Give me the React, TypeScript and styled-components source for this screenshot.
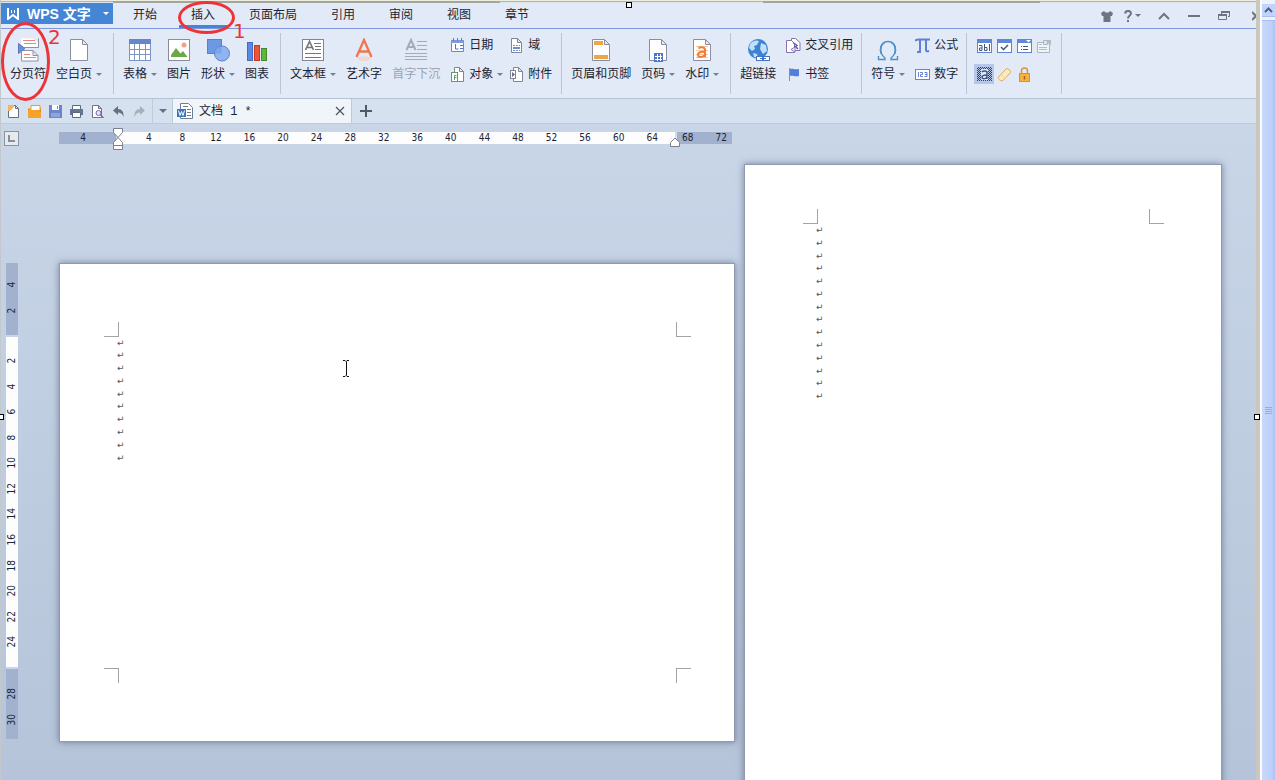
import React from "react";
import styled, { createGlobalStyle } from "styled-components";

const GlobalStyle = createGlobalStyle`
  * { box-sizing: border-box; }
  body {
    margin: 0;
    overflow: hidden;
    font-family: "Liberation Sans", "Noto Sans CJK SC", sans-serif;
    font-size: 12px;
    color: #1c2433;
  }
  button {
    font: inherit;
    color: inherit;
    background: none;
    border: 0;
    padding: 0;
    margin: 0;
    cursor: default;
  }
  svg { display: block; flex: none; }
`;

/* ---------- frame ---------- */

const Screen = styled.div`
  position: relative;
  display: flex;
  height: 100vh;
  overflow: hidden;
`;

const Main = styled.main`
  flex: 1;
  min-width: 0;
  display: flex;
  flex-direction: column;
  border-left: 1px solid #c3c8cd;
  background: #e1eaf6;
`;

const TopEdge = styled.div`
  display: flex;
  flex: none;
  height: 3px;
  border-top: 1px solid #ecece0;
  background: linear-gradient(#b4b6a9 1px, #dde4ea 1px);
`;

const EdgeStrip = styled.div<{ $grow: number; $dark?: boolean }>`
  flex: ${(p) => p.$grow} 1 0;
  background: ${(p) => (p.$dark ? "#a3a69b" : "transparent")};
`;

const FrameEdge = styled.div`
  flex: none;
  width: 6px;
  background: #c9c7be;
  border-right: 2px solid #fbfbf7;
`;

/* ---------- title bar ---------- */

const TitleBar = styled.header`
  display: flex;
  flex: none;
  height: 26px;
  border-bottom: 1px solid #7f95de;
`;

const AppButton = styled.button`
  display: flex;
  align-items: center;
  width: 112px;
  height: 21px;
  padding-left: 6px;
  gap: 7px;
  background: #4585d6;
  color: #fff;
  font-size: 14px;
  font-weight: 700;
  white-space: nowrap;
`;

const AppName = styled.span`
  flex: 1;
  text-align: left;
  line-height: 20px;
`;

const AppArrow = styled.span`
  width: 10px;
  display: flex;
`;

const MenuTabs = styled.nav`
  display: flex;
  gap: 10px;
  margin-left: 8px;
`;

const MenuTab = styled.button<{ $active?: boolean }>`
  height: 25px;
  padding: 2px 12px 0;
  line-height: 20px;
  white-space: nowrap;
  border-bottom: 3px solid ${(p) => (p.$active ? "#4585d6" : "transparent")};
`;

const WindowControls = styled.div`
  display: flex;
  margin-left: auto;
`;

const WindowButton = styled.button<{ $width: number }>`
  display: flex;
  align-items: center;
  justify-content: center;
  gap: 3px;
  width: ${(p) => p.$width}px;
  height: 25px;
  overflow: hidden;
`;

const CloseWindow = styled(WindowButton)`
  justify-content: flex-start;
  padding-left: 9px;
`;

/* ---------- ribbon ---------- */

const Ribbon = styled.section`
  display: flex;
  flex: none;
  height: 70px;
  padding: 4px 0;
  border-bottom: 1px solid #b4c2d4;
`;

const Group = styled.div<{ $start?: number; $end?: number }>`
  display: flex;
  gap: 10px;
  flex: none;
  padding: 5px ${(p) => p.$end ?? 11}px 0 ${(p) => p.$start ?? 9}px;
  border-right: 1px solid #b9c6d8;
`;

const BigButton = styled.button<{ $muted?: boolean }>`
  display: flex;
  flex-direction: column;
  align-items: center;
  height: 46px;
  gap: 3px;
  white-space: nowrap;
  color: ${(p) => (p.$muted ? "#9aa4b3" : "inherit")};
`;

const Label = styled.span`
  display: flex;
  align-items: center;
  line-height: 18px;
`;

const ArrowSlot = styled.span`
  display: flex;
  justify-content: flex-end;
  width: 10px;
`;

const SmallGrid = styled.div`
  display: grid;
  grid-template-columns: auto;
  grid-template-rows: 18px 18px;
  grid-auto-flow: column;
  align-content: start;
  justify-items: start;
  row-gap: 11px;
  column-gap: 6px;
  margin-top: -2px;
`;

const SmallButton = styled.button`
  display: flex;
  align-items: center;
  gap: 4px;
  line-height: 18px;
  white-space: nowrap;
`;

const FormGrid = styled.div`
  display: grid;
  grid-template-columns: repeat(4, 20px);
  grid-template-rows: 20px 20px;
  row-gap: 8px;
  align-content: start;
  margin-top: -2px;
`;

const FormButton = styled.button<{ $active?: boolean }>`
  display: flex;
  align-items: center;
  justify-content: center;
  background: ${(p) => (p.$active ? "#b5c6e8" : "transparent")};
`;

/* ---------- document tabs ---------- */

const TabBar = styled.div`
  display: flex;
  flex: none;
  height: 25px;
  background: #d5e1ee;
  border-bottom: 1px solid #bccada;
`;

const QuickAccess = styled.div`
  display: flex;
  padding-left: 2px;
`;

const QuickButton = styled.button`
  display: flex;
  align-items: center;
  justify-content: center;
  width: 21px;
  height: 24px;
`;

const QuickMore = styled(QuickButton)`
  width: 20px;
  margin-left: 2px;
  border-left: 1px solid #c0ccdb;
`;

const DocTab = styled.div`
  display: flex;
  align-items: center;
  width: 180px;
  padding: 0 6px 0 4px;
  gap: 6px;
  background: #f0f5fa;
  border: solid #bccada;
  border-width: 0 1px;
`;

const DocName = styled.span`
  flex: 1;
  padding-top: 2px;
  font-family: "Liberation Mono", "Noto Sans CJK SC", monospace;
  line-height: 22px;
`;

const NewTab = styled.button`
  display: flex;
  align-items: center;
  padding: 0 8px;
`;

/* ---------- workspace ---------- */

const Workspace = styled.section`
  flex: 1;
  min-height: 0;
  overflow: hidden;
  background: linear-gradient(#c9d6e8, #b5c4d9);
`;

const RulerRow = styled.div`
  display: flex;
  align-items: flex-start;
  padding: 7px 0 0 3px;
  height: 40px;
`;

const TabStop = styled.button`
  display: flex;
  align-items: center;
  justify-content: center;
  width: 15px;
  height: 15px;
  border: 1px solid #8893a3;
  background: #e6ebf0;
`;

const Ruler = styled.div`
  position: relative;
  display: flex;
  width: 673px;
  height: 12px;
  margin: 1px 0 0 40px;
  font-family: "DejaVu Sans Condensed", "DejaVu Sans", sans-serif;
  font-size: 10px;
  line-height: 12px;
`;

const RulerStart = styled.div`
  width: 57px;
  padding-right: 9px;
  text-align: center;
  background: #a1b1ce;
`;

const RulerBody = styled.div`
  display: flex;
  flex: 1;
  padding: 0 6px 0 14px;
  background: #fdfdfe;
  border: solid #d3dcea;
  border-width: 0 2px;
`;

const RulerCell = styled.span`
  flex: 1;
  text-align: center;
`;

const RulerEnd = styled.div`
  display: flex;
  gap: 22px;
  width: 55px;
  padding-left: 5px;
  background: #a1b1ce;
`;

const IndentMarker = styled.div`
  position: absolute;
  left: 54px;
  top: -4px;
`;

const RightMarker = styled.div`
  position: absolute;
  right: 52px;
  top: 5px;
`;

const Canvas = styled.div`
  display: flex;
  align-items: center;
  padding-left: 5px;
`;

const SideRuler = styled.div`
  display: flex;
  flex-direction: column;
  flex: none;
  width: 12px;
  height: 478px;
  font-family: "DejaVu Sans Condensed", "DejaVu Sans", sans-serif;
  font-size: 10px;
  line-height: 12px;
`;

const SideSegment = styled.div<{ $size: number; $from: number; $to: number; $dark?: boolean }>`
  display: flex;
  flex-direction: column;
  flex: none;
  height: ${(p) => p.$size}px;
  padding: ${(p) => p.$from}px 0 ${(p) => p.$to}px;
  background: ${(p) => (p.$dark ? "#a1b1ce" : "#fdfdfe")};
  & + & { border-top: 2px solid #c9d5e7; }
`;

const SideCell = styled.span`
  flex: 1;
  min-height: 0;
  writing-mode: vertical-rl;
  transform: rotate(180deg);
  text-align: center;
`;

const Pages = styled.div`
  display: flex;
  align-items: center;
  gap: 9px;
  margin-left: 41px;
`;

const Page = styled.article<{ $landscape?: boolean }>`
  display: grid;
  flex: none;
  grid-template: 15px 1fr 15px / 15px 1fr 15px;
  width: ${(p) => (p.$landscape ? 676 : 478)}px;
  height: ${(p) => (p.$landscape ? 479 : 676)}px;
  padding: ${(p) => (p.$landscape ? "58px 43px 58px 44px" : "44px 57px 43px 58px")};
  background: #fff;
  border: 1px solid #8f9bac;
  box-shadow: 0 0 7px rgba(72, 88, 120, 0.65);
`;

const Crop = styled.span<{ $v: "top" | "bottom"; $h: "left" | "right" }>`
  border: 0 solid #a3a3a3;
  grid-row: ${(p) => (p.$v === "top" ? 1 : 3)};
  grid-column: ${(p) => (p.$h === "left" ? 1 : 3)};
  border-width: ${(p) =>
    `${p.$v === "top" ? 0 : 1}px ${p.$h === "left" ? 1 : 0}px ${p.$v === "top" ? 1 : 0}px ${p.$h === "left" ? 0 : 1}px`};
`;

const Paragraphs = styled.div<{ $height: number }>`
  grid-row: 2;
  grid-column: 2;
  display: flex;
  flex-direction: column;
  height: ${(p) => p.$height}px;
  margin-left: -2px;
`;

const Mark = styled.span`
  flex: 1;
  min-height: 0;
  font-family: "DejaVu Sans", sans-serif;
  font-size: 9px;
  line-height: 13px;
  color: #555;
`;

/* ---------- scroll bar ---------- */

const ScrollBar = styled.div`
  display: flex;
  flex-direction: column;
  flex: none;
  width: 13px;
  padding-top: 4px;
  background: #eef2fc;
`;

const ScrollUp = styled.button`
  display: flex;
  align-items: center;
  justify-content: center;
  height: 13px;
  background: #c3d4fc;
  border-bottom: 1px solid #a9bdf0;
`;

const ScrollThumb = styled.div`
  flex: 1;
  display: flex;
  align-items: center;
  justify-content: center;
  margin-top: 3px;
  padding-top: 20px;
  background: linear-gradient(90deg, #c8d7fd, #bfd0fb 70%, #aac3f6);
  border-top: 1px solid #a9bdf0;
`;

/* ---------- annotations lying over the screen ---------- */

const Handle = styled.i<{ $x: number; $y: number }>`
  position: absolute;
  left: ${(p) => p.$x}px;
  top: ${(p) => p.$y}px;
  width: 6px;
  height: 6px;
  background: #fff;
  border: 1px solid #000;
`;

const Ring = styled.i<{ $x: number; $y: number; $w: number; $h: number }>`
  position: absolute;
  left: ${(p) => p.$x}px;
  top: ${(p) => p.$y}px;
  width: ${(p) => p.$w}px;
  height: ${(p) => p.$h}px;
  border: 3px solid #ee3338;
  border-radius: 50%;
  pointer-events: none;
`;

const Step = styled.span<{ $x: number; $y: number }>`
  position: absolute;
  left: ${(p) => p.$x}px;
  top: ${(p) => p.$y}px;
  font-family: "DejaVu Sans", sans-serif;
  font-size: 20px;
  line-height: 24px;
  color: #ee3338;
`;

const TextCursor = styled.div`
  position: absolute;
  left: 342px;
  top: 360px;
`;

/* ---------- icons ---------- */

const Arrow = ({ color = "#74809a" }: { color?: string }) => (
  <svg width="6" height="3" viewBox="0 0 6 3"><path d="M0 0h6L3 3z" fill={color} /></svg>
);

const Svg = ({ w, h = w, children }: { w: number; h?: number; children: React.ReactNode }) => (
  <svg width={w} height={h} viewBox={`0 0 ${w} ${h}`} fill="none">{children}</svg>
);

const Big = ({ children }: { children: React.ReactNode }) => <Svg w={24}>{children}</Svg>;

const Sheet = ({ stroke = "#8c8ca0" }: { stroke?: string }) => (
  <path d="M3.5 1.5h12l5 5v16h-17zM15.5 1.5v5h5" fill="#fff" stroke={stroke} />
);

const LogoIcon = () => (
  <Svg w={13} h={13}><path d="M1 1v11l5-4 5 4V1" stroke="#fff" strokeWidth="2" /><path d="M4.500 3v3M7.500 3v3" stroke="#fff" /></Svg>
);

const PageBreakIcon = () => (
  <Big>
    <path d="M5 .5h12l5 4v5H5z" fill="#fff" />
    <path d="M5 9.500h17.500V.5" stroke="#9090a4" />
    <path d="M7 2.500h12M8 5.500h12" stroke="#e9877a" />
    <path d="M5.500 22.500V12.500h11.500l5 5v5.500H5.500zM17 12.500v5h5" fill="#fff" stroke="#9090a4" />
    <path d="M8 16.500h6M8 19.500h12" stroke="#e9877a" />
    <path d="M2.500 5.500L9 10.500l-6.500 5z" fill="#6f8fd6" stroke="#5878c6" />
  </Big>
);

const BlankPageIcon = () => <Big><Sheet /></Big>;

const TableIcon = () => (
  <Big>
    <rect x="1.500" y="1.500" width="21" height="21" fill="#fff" stroke="#7d95c6" />
    <rect x="1" y="1" width="22" height="5" fill="#6688cb" />
    <path d="M1 11.500h22M1 16.500h22M6.500 6v17M11.500 6v17M17.500 6v17" stroke="#7d95c6" />
  </Big>
);

const PictureIcon = () => (
  <Big>
    <rect x="1.500" y="1.500" width="21" height="21" fill="#fff" stroke="#8b8d96" />
    <path d="M4 19v-2l5-7 4.500 5.500L16 13l4.500 6z" fill="#69a94a" />
    <circle cx="17" cy="7" r="2.500" fill="#f0a187" />
  </Big>
);

const ShapesIcon = () => (
  <Big>
    <rect x="1.500" y="1.500" width="14" height="14" fill="#6d98e4" stroke="#5b7fd0" />
    <circle cx="16" cy="15.500" r="7.500" fill="#8fb4ef" stroke="#5b7fd0" />
    <path d="M9 15.500v-1a7 7 0 0 1 6.500-6v7z" fill="#7ba5e9" />
  </Big>
);

const ChartIcon = () => (
  <Big>
    <rect x="2.500" y="4.500" width="5" height="18" fill="#5a8be3" stroke="#3e6cc9" />
    <rect x="9.500" y="7.500" width="5" height="15" fill="#ee5536" stroke="#c53c22" />
    <rect x="16.500" y="10.500" width="5" height="12" fill="#60b53a" stroke="#418c25" />
  </Big>
);

const LetterLines = ({ color }: { color: string }) => (
  <>
    <path d="M4.500 12l4-8.500L12.500 12M6 9.500h5" stroke={color} strokeWidth="1.600" />
    <path d="M13 5.500h7M14 8.500h6M14 11.500h6M4 15.500h16M4 19.500h16" stroke={color} />
  </>
);

const TextBoxIcon = () => (
  <Big><rect x="1.500" y="1.500" width="21" height="21" fill="#fff" stroke="#85858f" /><LetterLines color="#74747e" /></Big>
);

const WordArtIcon = () => (
  <Big>
    <path d="M5 20c3-2 11-2 14 0l-3 3H8z" fill="#fbc5b4" opacity=".5" />
    <path d="M4.500 19L12 2l7.500 17M7 13.500h10" stroke="#f0764f" strokeWidth="2.300" />
  </Big>
);

const DropCapIcon = () => (
  <Big>
    <path d="M2.500 12l4.500-10L11.500 12M4 9h6" stroke="#a2abba" strokeWidth="2" />
    <path d="M13 3.500h10M13 7.500h10M13 11.500h10M1 15.500h22M1 18.500h22M1 21.500h22" stroke="#a2abba" />
  </Big>
);

const HeaderFooterIcon = () => (
  <Big><Sheet /><path d="M5 3h9v4H5zM5 17h14v4H5z" fill="#eda746" /></Big>
);

const PageNumberIcon = () => (
  <Big>
    <Sheet /><rect x="8" y="15" width="9" height="9" fill="#4b74d3" />
    <path d="M11.500 16v7M14.500 16v7M9 18.500h7M9 21.500h7" stroke="#fff" />
  </Big>
);

const WatermarkIcon = () => (
  <Big>
    <Sheet /><path d="M6 8.500h12M6 12.500h12M6 16.500h12M6 19.500h12" stroke="#f7c49c" />
    <path d="M8.500 10.500c1-1.500 6.500-2 6.500 1.500v7M15 14c-4-.5-7 .2-7 2.800 0 3 5 3 7 0" stroke="#ee7d35" strokeWidth="2" />
  </Big>
);

const LinkIcon = () => (
  <Big>
    <circle cx="12" cy="11" r="10" fill="#3d83d3" />
    <path d="M4 6c3-4 7-4 9-3l-2 4-3 1 1 3-3 2-3-3zM15 5l5 2 1 6-4 3-3-5zM7 15l4 1 1 4-4-1z" fill="#bfe0f8" />
    <rect x="10.500" y="18.500" width="6" height="4" fill="#fff" stroke="#4473c8" />
    <rect x="17.500" y="18.500" width="6" height="4" fill="#fff" stroke="#4473c8" />
    <path d="M14 20.500h6" stroke="#4473c8" />
  </Big>
);

const OmegaIcon = () => (
  <Big>
    <path d="M2.500 18v3.500h6.500v-1.500C6 17.500 4.500 15 4.500 11.500c0-5 3-8 7.500-8s7.500 3 7.500 8c0 3.500-1.500 6-4.500 8.500v1.500h6.500V18" stroke="#4c8fcb" strokeWidth="1.400" />
    <path d="M5 15.500c-1-5 0-9 3.500-11M19 15.500c1-5 0-9-3.500-11" stroke="#4c8fcb" strokeWidth="1.600" />
  </Big>
);

const DateIcon = () => (
  <Svg w={15}>
    <path d="M1.500 2.500h12v11h-12z" fill="#fff" stroke="#6a86cf" />
    <path d="M1 2h13v3H1z" fill="#7f9bdd" /><path d="M3.500 0v3M7.500 0v3M11.500 0v3" stroke="#5f7dcc" />
    <path d="M5.500 6v5h3M10 7.500h3M10 10.500h3" stroke="#4e72c8" />
  </Svg>
);

const SmallSheet = () => <path d="M2.500 .5h6l4 4v10h-10zM8.500 .5v4h4" fill="#fff" stroke="#83839a" />;

const ObjectIcon = () => (
  <Svg w={15}>
    <path d="M4.500 .5h5l4 4v10h-9zM9.500 .5v4h4" fill="#fff" stroke="#83839a" />
    <rect x="1.500" y="5.500" width="6" height="9" fill="#fff" stroke="#58a45a" /><path d="M4.500 13V8.500h2M4.500 10.500h2" stroke="#58a45a" />
  </Svg>
);

const FieldIcon = () => (
  <Svg w={15}><SmallSheet /><path d="M4 7.500h7M4 12.500h7" stroke="#6d8bce" strokeDasharray="2 1" /><path d="M4 10h7" stroke="#6d8bce" strokeWidth="2" /></Svg>
);

const AttachIcon = () => (
  <Svg w={15}>
    <path d="M4.500 .5h5l4 4v10h-9zM9.500 .5v4h4" fill="#fff" stroke="#83839a" />
    <rect x="1.500" y="3.500" width="5" height="8" fill="#fff" stroke="#83839a" /><path d="M3 5l3 2.500L3 10z" fill="#6b6b85" />
  </Svg>
);

const CrossRefIcon = () => (
  <Svg w={15}>
    <path d="M5.500 .5h4l4.500 4v8H5.500z" fill="#fff" stroke="#8372b4" />
    <path d="M.5 2.500h5l3 3v9h-8z" fill="#fff" stroke="#8372b4" />
    <path d="M7 4.500l4 3-1.500 1L12 11" stroke="#6f5aa8" strokeWidth="1.500" /><path d="M9 9l-4 2.500L9 14z" fill="#fff" stroke="#8372b4" />
  </Svg>
);

const FlagIcon = () => (
  <Svg w={15}><path d="M3.500 1v13" stroke="#8392b4" /><path d="M4 2c3-1 4 1 9 0v7c-5 1-6-1-9 0z" fill="#4f7fdb" /></Svg>
);

const PiIcon = () => (
  <Svg w={15}><path d="M0 3c1-1.500 2-1.500 4-1.500h11M5 2v11.500M11 2v10c0 1.500 1 1.500 3 1M2 14h4" stroke="#5f7fd0" strokeWidth="2" /></Svg>
);

const NumberIcon = () => (
  <Svg w={15}>
    <rect x=".5" y="2.500" width="14" height="10" fill="#fff" stroke="#6485d2" />
    <path d="M3.500 5v5M5 5.500h2.500v2H5.500v2H8M9.500 5.500h2.500v4H9.500M10 7.500h2" stroke="#6485d2" />
  </Svg>
);

const FormFrame = () => (
  <><rect x=".5" y=".5" width="14" height="13" fill="#fff" stroke="#5f82d0" /><path d="M0 0h15v4H0z" fill="#5f88dc" /></>
);

const TextFieldIcon = () => (
  <Svg w={15} h={14}><FormFrame /><path d="M2 6.500h3v5H2.500V9H5M7.500 5v6.500H10V8.500H7.500M12.500 5v7" stroke="#44557a" /></Svg>
);
const CheckFieldIcon = () => (
  <Svg w={15} h={14}><FormFrame /><path d="M4 8l2.500 2.500L11 6" stroke="#44557a" strokeWidth="1.500" /></Svg>
);
const ListFieldIcon = () => (
  <Svg w={15} h={14}><FormFrame /><path d="M9 1h5L11.500 3.500z" fill="#fff" /><path d="M4 7.500h1M6 7.500h5M4 10.500h1M6 10.500h5" stroke="#44557a" /></Svg>
);
const FieldOptionsIcon = () => (
  <Svg w={15} h={14}>
    <path d="M.5 3.500h12v10H.5z" fill="#f0f3f8" stroke="#aab4c2" />
    <path d="M6.500 1.500h4v4h-4z" fill="#dde3ea" stroke="#aab4c2" /><path d="M10 1h4v5h-2z" fill="#b2bbc7" />
    <path d="M2 5.500h3M2 8.500h8M2 10.500h8" stroke="#b3bdca" />
  </Svg>
);
const ShadingIcon = () => (
  <Svg w={15}>
    <path d="M0 1.500h15M0 3.500h15M0 5.500h15M0 7.500h15M0 9.500h15M0 11.500h15M0 13.500h15" stroke="#31415f" strokeDasharray="1 1" />
    <path d="M1 .5h14M1 2.500h14M1 4.500h14M1 6.500h14M1 8.500h14M1 10.500h14M1 12.500h14" stroke="#31415f" strokeDasharray="1 1" />
    <path d="M4 2h7v11H4z" fill="#dfe9f8" />
    <path d="M5 5c1-1.500 5-1.500 5 .5V12M10 8c-3 0-5 .4-5 2 0 2.500 4 2 5 0" stroke="#3b5486" strokeWidth="1.500" />
  </Svg>
);
const EraserIcon = () => (
  <Svg w={15}><path d="M1.500 10L9 2c1-1 5 1 4.500 3.500L6 13.500C4 14.500.5 12 1.500 10z" fill="#fdebc0" stroke="#dba75c" /><path d="M4 8l5 3" stroke="#f5d595" /></Svg>
);
const LockIcon = () => (
  <Svg w={15}><path d="M4.500 7V4a3 3 0 0 1 6 0v3" stroke="#d8933a" strokeWidth="1.500" /><rect x="2.500" y="6.500" width="10" height="8" fill="#f7b23e" stroke="#dd8f28" /><path d="M7.500 9v3.500" stroke="#a5621a" strokeWidth="1.500" /></Svg>
);

const NewIcon = () => (
  <Svg w={13}><path d="M1.500 .5h7l3 3v9h-10zM8.500 .5v3h3" fill="#fff" stroke="#696d80" /><path d="M1 0h6v2L3 6H1z" fill="#f4b263" /></Svg>
);
const OpenIcon = () => (
  <Svg w={13}><path d="M.5 3.500V12.500h12V3.500h-2" fill="#f59e24" stroke="#e18a17" /><path d="M3 .5h9v5H3z" fill="#fff" stroke="#ee9a2c" /><path d="M0 5h7l1 2h5v6H0z" fill="#f7a22b" /></Svg>
);
const SaveIcon = () => (
  <Svg w={13}><path d="M0 0h13v13H0z" fill="#6b86cc" /><path d="M3 0h7v5H3z" fill="#fff" /><path d="M8 1h1v3H8z" fill="#6b86cc" /><path d="M2 8h9v4H2z" fill="#8ea4da" /></Svg>
);
const PrintIcon = () => (
  <Svg w={13}><path d="M2.500 4V.5h8V4" fill="#fff" stroke="#596783" /><path d="M0 4h13v6H0z" fill="#647495" /><path d="M2.500 7.500h8v5h-8z" fill="#fff" stroke="#596783" /></Svg>
);
const PreviewIcon = () => (
  <Svg w={13}><path d="M1.500 .5h6l3 3v9h-9zM7.500 .5v3h3" fill="#fff" stroke="#75718c" /><circle cx="7.500" cy="8" r="2.500" fill="#dce7fa" stroke="#8064a0" /><path d="M9.500 10l3 3" stroke="#8064a0" strokeWidth="1.500" /></Svg>
);
const UndoIcon = ({ redo }: { redo?: boolean }) => (
  <Svg w={13}>
    <g transform={redo ? "translate(13 0) scale(-1 1)" : undefined}>
      <path d="M1 5.500L6 1v3c4 0 6 3 5.500 8C10.500 9 9 7.500 6 7.500V10z" fill={redo ? "#a6b0bd" : "#66707f"} />
    </g>
  </Svg>
);
const DocIcon = () => (
  <Svg w={16}>
    <path d="M3.500 .5h8l4 4v11h-12z" fill="#fff" stroke="#6d7f92" /><path d="M6 3.500h5M10 6.500h4M10 9.500h4M10 12.500h4" stroke="#6d7f92" />
    <path d="M0 6h9v8H0z" fill="#3a76bd" /><path d="M1.500 7.500l1.500 5 1.500-4 1.500 4 1.500-5" stroke="#fff" />
  </Svg>
);

/* ---------- data ---------- */

const menuTabs = ["开始", "插入", "页面布局", "引用", "审阅", "视图", "章节"];
const rulerNumbers = Array.from({ length: 16 }, (_, i) => (i + 1) * 4);
const sideNumbers = Array.from({ length: 12 }, (_, i) => (i + 1) * 2);

type ToolProps = { icon: React.ReactNode; text: string; menu?: boolean; muted?: boolean };

const BigTool = ({ icon, text, menu, muted }: ToolProps) => (
  <BigButton type="button" $muted={muted}>
    {icon}
    <Label>{text}{menu && <ArrowSlot><Arrow /></ArrowSlot>}</Label>
  </BigButton>
);

const SmallTool = ({ icon, text, menu }: ToolProps) => (
  <SmallButton type="button">
    {icon}
    <Label>{text}{menu && <ArrowSlot><Arrow /></ArrowSlot>}</Label>
  </SmallButton>
);

const DocumentPage = ({ landscape, marks, height }: { landscape?: boolean; marks: number; height: number }) => (
  <Page $landscape={landscape}>
    <Crop $v="top" $h="left" />
    <Crop $v="top" $h="right" />
    <Paragraphs $height={height}>
      {Array.from({ length: marks }, (_, i) => <Mark key={i}>↵</Mark>)}
    </Paragraphs>
    <Crop $v="bottom" $h="left" />
    <Crop $v="bottom" $h="right" />
  </Page>
);

export default function App() {
  return (
    <>
      <GlobalStyle />
      <Screen>
        <Main>
          <TopEdge>
            <EdgeStrip $grow={112} />
            <EdgeStrip $grow={387} $dark />
            <EdgeStrip $grow={264} />
            <EdgeStrip $grow={277} $dark />
            <EdgeStrip $grow={216} />
          </TopEdge>

          <TitleBar>
            <AppButton type="button">
              <LogoIcon />
              <AppName>WPS 文字</AppName>
              <AppArrow><Arrow color="#fff" /></AppArrow>
            </AppButton>
            <MenuTabs>
              {menuTabs.map((name) => (
                <MenuTab key={name} type="button" $active={name === "插入"}>{name}</MenuTab>
              ))}
            </MenuTabs>
            <WindowControls>
              <WindowButton type="button" $width={24} aria-label="皮肤">
                <Svg w={12}><path d="M3 1l1.500 1.500h3L9 1l3 2-1 3H9.500v6h-7V6H1L0 3z" fill="#6d7482" /></Svg>
              </WindowButton>
              <WindowButton type="button" $width={26} aria-label="帮助">
                <Svg w={8} h={12}><path d="M1 3.500C1.500 0 7 0 7 3.500 7 5.500 4 5.500 4 8.500M4 10v2" stroke="#6d7482" strokeWidth="2" /></Svg>
                <Arrow color="#6d7482" />
              </WindowButton>
              <WindowButton type="button" $width={38} aria-label="收起功能区">
                <Svg w={12} h={8}><path d="M1 7l5-5 5 5" stroke="#6d7482" strokeWidth="2" /></Svg>
              </WindowButton>
              <WindowButton type="button" $width={22} aria-label="最小化">
                <Svg w={12} h={2}><path d="M0 1h12" stroke="#6d7482" strokeWidth="2" /></Svg>
              </WindowButton>
              <WindowButton type="button" $width={38} aria-label="还原">
                <Svg w={12} h={9}>
                  <path d="M3.500 3V.5h8v5H10" stroke="#6d7482" /><path d="M3 1h9" stroke="#6d7482" strokeWidth="2" />
                  <path d="M.5 3.500h8v5h-8z" fill="#e1eaf6" stroke="#6d7482" /><path d="M0 4h9" stroke="#6d7482" strokeWidth="2" />
                </Svg>
              </WindowButton>
              <CloseWindow type="button" $width={13} aria-label="关闭">
                <Svg w={10}><path d="M0 1l8 8M8 1L0 9" stroke="#6d7482" strokeWidth="2" /></Svg>
              </CloseWindow>
            </WindowControls>
          </TitleBar>

          <Ribbon>
            <Group>
              <BigTool icon={<PageBreakIcon />} text="分页符" />
              <BigTool icon={<BlankPageIcon />} text="空白页" menu />
            </Group>
            <Group>
              <BigTool icon={<TableIcon />} text="表格" menu />
              <BigTool icon={<PictureIcon />} text="图片" />
              <BigTool icon={<ShapesIcon />} text="形状" menu />
              <BigTool icon={<ChartIcon />} text="图表" />
            </Group>
            <Group $end={9}>
              <BigTool icon={<TextBoxIcon />} text="文本框" menu />
              <BigTool icon={<WordArtIcon />} text="艺术字" />
              <BigTool icon={<DropCapIcon />} text="首字下沉" muted />
              <SmallGrid>
                <SmallTool icon={<DateIcon />} text="日期" />
                <SmallTool icon={<ObjectIcon />} text="对象" menu />
                <SmallTool icon={<FieldIcon />} text="域" />
                <SmallTool icon={<AttachIcon />} text="附件" />
              </SmallGrid>
            </Group>
            <Group>
              <BigTool icon={<HeaderFooterIcon />} text="页眉和页脚" />
              <BigTool icon={<PageNumberIcon />} text="页码" menu />
              <BigTool icon={<WatermarkIcon />} text="水印" menu />
            </Group>
            <Group $end={8}>
              <BigTool icon={<LinkIcon />} text="超链接" />
              <SmallGrid>
                <SmallTool icon={<CrossRefIcon />} text="交叉引用" />
                <SmallTool icon={<FlagIcon />} text="书签" />
              </SmallGrid>
            </Group>
            <Group $end={8}>
              <BigTool icon={<OmegaIcon />} text="符号" menu />
              <SmallGrid>
                <SmallTool icon={<PiIcon />} text="公式" />
                <SmallTool icon={<NumberIcon />} text="数字" />
              </SmallGrid>
            </Group>
            <Group $start={7} $end={7}>
              <FormGrid>
                <FormButton type="button" aria-label="文字型窗体域"><TextFieldIcon /></FormButton>
                <FormButton type="button" aria-label="复选框型窗体域"><CheckFieldIcon /></FormButton>
                <FormButton type="button" aria-label="下拉型窗体域"><ListFieldIcon /></FormButton>
                <FormButton type="button" aria-label="窗体域选项" disabled><FieldOptionsIcon /></FormButton>
                <FormButton type="button" aria-label="窗体域底纹" $active><ShadingIcon /></FormButton>
                <FormButton type="button" aria-label="重新设置窗体域"><EraserIcon /></FormButton>
                <FormButton type="button" aria-label="保护窗体"><LockIcon /></FormButton>
              </FormGrid>
            </Group>
          </Ribbon>

          <TabBar>
            <QuickAccess>
              <QuickButton type="button" aria-label="新建"><NewIcon /></QuickButton>
              <QuickButton type="button" aria-label="打开"><OpenIcon /></QuickButton>
              <QuickButton type="button" aria-label="保存"><SaveIcon /></QuickButton>
              <QuickButton type="button" aria-label="打印"><PrintIcon /></QuickButton>
              <QuickButton type="button" aria-label="打印预览"><PreviewIcon /></QuickButton>
              <QuickButton type="button" aria-label="撤销"><UndoIcon /></QuickButton>
              <QuickButton type="button" aria-label="恢复"><UndoIcon redo /></QuickButton>
              <QuickMore type="button" aria-label="更多">
                <Svg w={8} h={4}><path d="M0 0h8L4 4z" fill="#66707f" /></Svg>
              </QuickMore>
            </QuickAccess>
            <DocTab>
              <DocIcon />
              <DocName>文档 1 *</DocName>
              <button type="button" aria-label="关闭文档">
                <Svg w={10}><path d="M1 1l8 8M9 1L1 9" stroke="#4e5966" strokeWidth="1.300" /></Svg>
              </button>
            </DocTab>
            <NewTab type="button" aria-label="新建标签">
              <Svg w={12}><path d="M6 0v12M0 6h12" stroke="#4e5966" strokeWidth="2" /></Svg>
            </NewTab>
          </TabBar>

          <Workspace>
            <RulerRow>
              <TabStop type="button" aria-label="制表符">
                <Svg w={7}><path d="M1 0v6h6" stroke="#8a8f96" strokeWidth="2" /></Svg>
              </TabStop>
              <Ruler>
                <RulerStart>4</RulerStart>
                <RulerBody>{rulerNumbers.map((n) => <RulerCell key={n}>{n}</RulerCell>)}</RulerBody>
                <RulerEnd><span>68</span><span>72</span></RulerEnd>
                <IndentMarker>
                  <Svg w={10} h={23}>
                    <path d="M.5 .5h9v4L5 9.500.5 4.500zM5 9.500l4.500 5v3H.5v-3zM.5 17.500h9v4h-9z" fill="#fff" stroke="#7b818c" />
                  </Svg>
                </IndentMarker>
                <RightMarker>
                  <Svg w={10} h={11}><path d="M5 1l4.500 4.500v4h-9v-4z" fill="#fff" stroke="#7b818c" /></Svg>
                </RightMarker>
              </Ruler>
            </RulerRow>
            <Canvas>
              <SideRuler>
                <SideSegment $dark $size={72} $from={9} $to={12}>
                  <SideCell>4</SideCell><SideCell>2</SideCell>
                </SideSegment>
                <SideSegment $size={332} $from={11} $to={12}>
                  {sideNumbers.map((n) => <SideCell key={n}>{n}</SideCell>)}
                </SideSegment>
                <SideSegment $dark $size={72} $from={12} $to={7}>
                  <SideCell>28</SideCell><SideCell>30</SideCell>
                </SideSegment>
              </SideRuler>
              <Pages>
                <DocumentPage landscape marks={10} height={128} />
                <DocumentPage marks={14} height={179} />
              </Pages>
            </Canvas>
          </Workspace>
        </Main>

        <FrameEdge />
        <ScrollBar>
          <ScrollUp type="button" aria-label="向上滚动">
            <Svg w={9} h={6}><path d="M1 5l3.500-3.500L8 5" stroke="#4d6185" strokeWidth="2" /></Svg>
          </ScrollUp>
          <ScrollThumb>
            <Svg w={7} h={8}><path d="M0 .5h7M0 2.500h7M0 4.500h7M0 6.500h7" stroke="#8caef0" /></Svg>
          </ScrollThumb>
        </ScrollBar>

        <TextCursor>
          <Svg w={8} h={17}><path d="M1 .5h2l1 1 1-1h2M4.500 1.500v14M1 16.500h2l1-1 1 1h2" stroke="#111" /></Svg>
        </TextCursor>
        <Handle $x={626} $y={2} />
        <Handle $x={-2} $y={414} />
        <Handle $x={1254} $y={414} />
        <Ring $x={178} $y={1} $w={57} $h={33} />
        <Ring $x={1} $y={22} $w={49} $h={79} />
        <Step $x={233} $y={19}>1</Step>
        <Step $x={48} $y={25}>2</Step>
      </Screen>
    </>
  );
}
